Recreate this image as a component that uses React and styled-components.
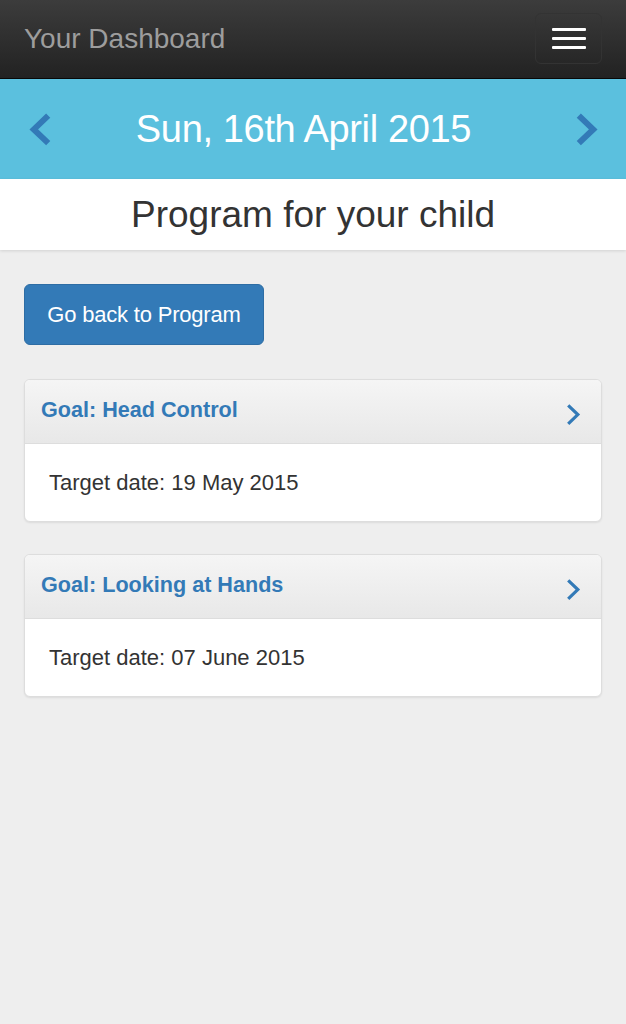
import styled, { createGlobalStyle } from "styled-components";

const GlobalStyle = createGlobalStyle`
  html, body {
    margin: 0;
    padding: 0;
    background: #eeeeee;
    font-family: "Liberation Sans", Arial, sans-serif;
    color: #333;
  }
  * { box-sizing: border-box; }
`;

const goals = [
  { title: "Goal: Head Control", target: "19 May 2015" },
  { title: "Goal: Looking at Hands", target: "07 June 2015" },
];

const Chevron = ({ dir = "right", size = 24, stroke = 5 }) => (
  <svg width={size} height={size * 1.45} viewBox="0 0 20 29" fill="none">
    <path
      d={dir === "right" ? "M4 3 L16 14.5 L4 26" : "M16 3 L4 14.5 L16 26"}
      stroke="#337ab7"
      strokeWidth={stroke}
      strokeLinecap="butt"
      strokeLinejoin="miter"
    />
  </svg>
);

export default function App() {
  return (
    <>
      <GlobalStyle />
      <Page>
        <Navbar>
          <Brand>Your Dashboard</Brand>
          <Toggle aria-label="menu">
            <Bar />
            <Bar />
            <Bar />
          </Toggle>
        </Navbar>
        <DateBar>
          <NavArrow><Chevron dir="left" /></NavArrow>
          <DateText>Sun, 16th April 2015</DateText>
          <NavArrow><Chevron dir="right" /></NavArrow>
        </DateBar>
        <TitleBar>Program for your child</TitleBar>
        <Content>
          <BackButton>Go back to Program</BackButton>
          {goals.map((g) => (
            <Panel key={g.title}>
              <PanelHeader>
                <PanelTitle>{g.title}</PanelTitle>
                <HeaderArrow><Chevron dir="right" size={16} stroke={4} /></HeaderArrow>
              </PanelHeader>
              <PanelBody>Target date: {g.target}</PanelBody>
            </Panel>
          ))}
        </Content>
      </Page>
    </>
  );
}

const Page = styled.div`
  min-height: 1024px;
  background: #eeeeee;
`;

const Navbar = styled.div`
  height: 79px;
  display: flex;
  align-items: center;
  justify-content: space-between;
  padding: 0 24px;
  background: linear-gradient(to bottom, #3c3c3c 0%, #222 100%);
  border-bottom: 1px solid #080808;
`;

const Brand = styled.div`
  font-size: 28px;
  color: #9d9d9d;
  margin-top: -1px;
`;

const Toggle = styled.button`
  width: 67px;
  height: 51px;
  margin-top: -1px;
  border: 1px solid #333;
  border-radius: 6px;
  background: transparent;
  display: flex;
  flex-direction: column;
  align-items: center;
  justify-content: center;
  gap: 6px;
  padding: 0;
`;

const Bar = styled.span`
  display: block;
  width: 34px;
  height: 3px;
  border-radius: 1px;
  background: #fff;
`;

const DateBar = styled.div`
  height: 100px;
  background: #5bc0de;
  display: flex;
  align-items: center;
  justify-content: space-between;
  padding: 0 28px 0 29px;
`;

const NavArrow = styled.div`
  display: flex;
  align-items: center;
`;

const DateText = styled.div`
  font-size: 38px;
  letter-spacing: -0.35px;
  color: #fff;
  margin-right: 20px;
`;

const TitleBar = styled.div`
  height: 71px;
  background: #fff;
  display: flex;
  align-items: center;
  justify-content: center;
  font-size: 37px;
  color: #333;
  box-shadow: 0 1px 3px rgba(0, 0, 0, 0.12);
  position: relative;
`;

const Content = styled.div`
  padding: 34px 24px;
  display: flex;
  flex-direction: column;
  align-items: stretch;
`;

const BackButton = styled.button`
  align-self: flex-start;
  width: 240px;
  height: 61px;
  background: #337ab7;
  border: 1px solid #2e6da4;
  border-radius: 6px;
  color: #fff;
  font-family: "Liberation Sans", Arial, sans-serif;
  font-size: 22px;
  letter-spacing: -0.2px;
  margin-bottom: 34px;
`;

const Panel = styled.div`
  background: #fff;
  border: 1px solid #ddd;
  border-radius: 6px;
  box-shadow: 0 1px 2px rgba(0, 0, 0, 0.08);
  margin-bottom: 32px;
  overflow: hidden;
`;

const PanelHeader = styled.div`
  height: 64px;
  display: flex;
  align-items: center;
  justify-content: space-between;
  padding: 0 20px 0 16px;
  background: linear-gradient(to bottom, #f5f5f5 0%, #e8e8e8 100%);
  border-bottom: 1px solid #ddd;
`;

const PanelTitle = styled.div`
  font-size: 21.6px;
  font-weight: bold;
  color: #337ab7;
  margin-top: -3px;
`;

const HeaderArrow = styled.div`
  display: flex;
  margin-top: 6px;
`;

const PanelBody = styled.div`
  height: 77px;
  display: flex;
  align-items: center;
  padding: 0 24px;
  font-size: 22px;
  color: #333;
`;
